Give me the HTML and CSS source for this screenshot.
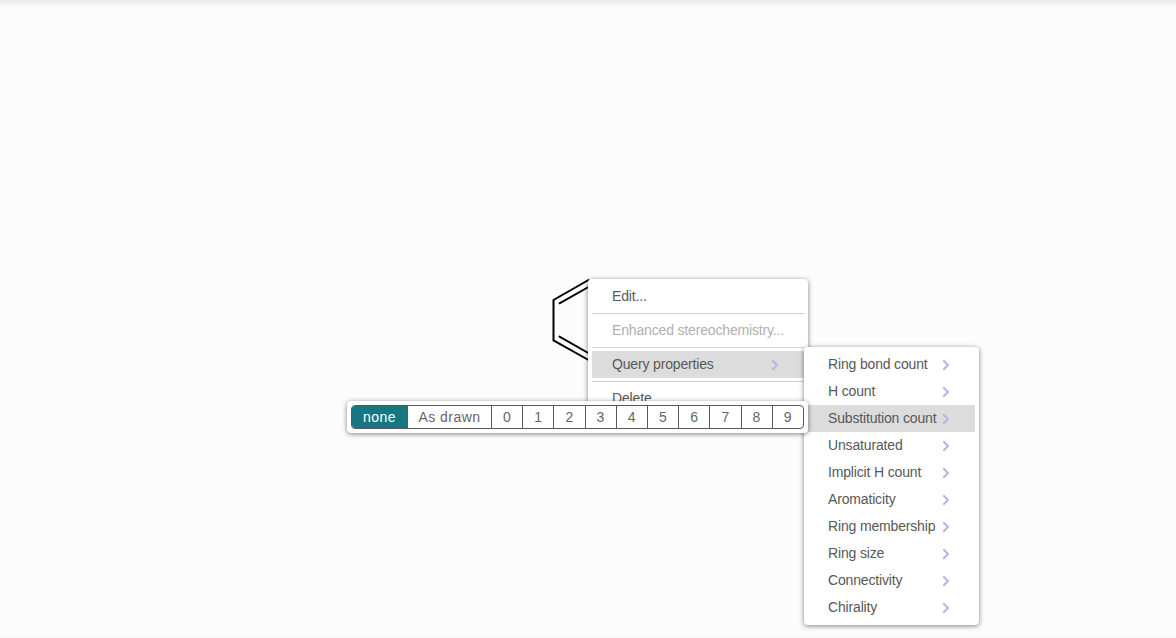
FILE: index.html
```html
<!DOCTYPE html>
<html lang="en">
<head>
<meta charset="utf-8">
<title>Structure editor</title>
<link rel="stylesheet" href="styles.css">
</head>
<body>
<main class="canvas">
  <svg class="molecule" width="50" height="100" viewBox="545 270 50 100" fill="none" stroke="#000" stroke-width="2" stroke-linecap="round">
    <path d="M588.5 280 553.5 300V340.300L588.5 360M588.500 287 559.500 303.300M559.500 336.600 590 354"/>
  </svg>
  <div class="menu menu-main">
    <div class="item">Edit...</div>
    <div class="separator"></div>
    <div class="item disabled">Enhanced stereochemistry...</div>
    <div class="separator"></div>
    <div class="item active">Query properties<svg class="arrow" viewBox="0 0 8 12"><path d="M1.300 1.200 6 6 1.300 10.800"/></svg></div>
    <div class="separator"></div>
    <div class="item">Delete</div>
  </div>
  <div class="menu menu-sub">
    <div class="item">Ring bond count<svg class="arrow" viewBox="0 0 8 12"><path d="M1.300 1.200 6 6 1.300 10.800"/></svg></div>
    <div class="item">H count<svg class="arrow" viewBox="0 0 8 12"><path d="M1.300 1.200 6 6 1.300 10.800"/></svg></div>
    <div class="item active">Substitution count<svg class="arrow" viewBox="0 0 8 12"><path d="M1.300 1.200 6 6 1.300 10.800"/></svg></div>
    <div class="item">Unsaturated<svg class="arrow" viewBox="0 0 8 12"><path d="M1.300 1.200 6 6 1.300 10.800"/></svg></div>
    <div class="item">Implicit H count<svg class="arrow" viewBox="0 0 8 12"><path d="M1.300 1.200 6 6 1.300 10.800"/></svg></div>
    <div class="item">Aromaticity<svg class="arrow" viewBox="0 0 8 12"><path d="M1.300 1.200 6 6 1.300 10.800"/></svg></div>
    <div class="item">Ring membership<svg class="arrow" viewBox="0 0 8 12"><path d="M1.300 1.200 6 6 1.300 10.800"/></svg></div>
    <div class="item">Ring size<svg class="arrow" viewBox="0 0 8 12"><path d="M1.300 1.200 6 6 1.300 10.800"/></svg></div>
    <div class="item">Connectivity<svg class="arrow" viewBox="0 0 8 12"><path d="M1.300 1.200 6 6 1.300 10.800"/></svg></div>
    <div class="item">Chirality<svg class="arrow" viewBox="0 0 8 12"><path d="M1.300 1.200 6 6 1.300 10.800"/></svg></div>
  </div>
  <div class="menu menu-options">
    <div class="group">
      <span class="option selected">none</span><span class="option wide">As drawn</span><span class="option">0</span><span class="option">1</span><span class="option">2</span><span class="option">3</span><span class="option">4</span><span class="option">5</span><span class="option">6</span><span class="option">7</span><span class="option">8</span><span class="option">9</span>
    </div>
  </div>
</main>
</body>
</html>
```
FILE: styles.css
```css
* { box-sizing: border-box; }
body { margin: 0; font: 14px/27px "Liberation Sans", Arial, sans-serif; color: #585858; }
.canvas {
  position: relative;
  height: 638px;
  overflow: hidden;
  background: linear-gradient(#e9e9ec, #f5f5f7 4px, #fcfcfc 8px, #fcfcfc 635px, #f8f8f8);
}
.molecule { position: absolute; left: 545px; top: 270px; }
.menu {
  position: absolute;
  padding: 4px;
  background: #fff;
  border-radius: 4px;
  box-shadow: 0 1px 5px rgba(0, 0, 0, .5);
}
.menu-main { left: 588px; top: 279px; width: 220px; height: 137px; }
.menu-sub { left: 804px; top: 347px; width: 175px; }
.menu-options { left: 347px; top: 401px; width: 461px; height: 32px; }
.item {
  display: flex;
  align-items: center;
  justify-content: space-between;
  height: 27px;
  padding: 0 25px 0 20px;
  white-space: nowrap;
  letter-spacing: -.16px;
}
.active { background: #dcdcdc; }
.disabled { color: #b0b0b0; padding-right: 0; }
.separator { height: 1px; margin: 3px 0; background: #cad3dd; }
.arrow {
  flex: none;
  width: 8px;
  height: 12px;
  margin-top: 1px;
  fill: none;
  stroke: #b4b8dc;
  stroke-width: 2;
}
.group {
  display: flex;
  height: 24px;
  border: 1px solid #585858;
  border-radius: 4px;
  overflow: hidden;
  color: #666;
  font-size: 14px;
  line-height: 23px;
  letter-spacing: .45px;
}
.option { flex: 1; text-align: center; border-left: 1px solid #585858; }
.selected { flex: 0 0 55px; border: 0; background: #167782; color: #fff; }
.wide { flex: 0 0 84px; }
```
